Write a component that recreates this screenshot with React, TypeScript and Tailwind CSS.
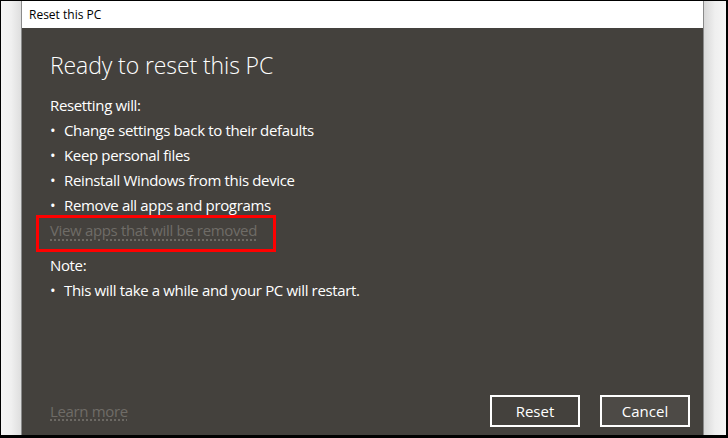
import React from "react";

const font = { fontFamily: '"Open Sans", "Noto Sans", "Liberation Sans", sans-serif' };

function Bullet({ children }: { children: React.ReactNode }) {
  return (
    <div className="flex h-[25px] items-center">
      <span className="w-[14px] text-[15px]">•</span>
      <span>{children}</span>
    </div>
  );
}

export default function App() {
  return (
    <div
      className="flex h-[438px] w-[728px] bg-black pt-px pl-px pr-[2px] pb-[3px] overflow-hidden"
      style={font}
    >
      <div className="w-[20px] shrink-0 bg-gradient-to-r from-[#f4f4f4] via-[#f0f0f0] to-[#dedede]" />
      <div className="flex w-[683px] shrink-0 flex-col border-x border-[#8a8a8a]">
        <div className="flex h-[27px] shrink-0 items-center bg-white pl-[7px] text-[12px] text-black">
          Reset this PC
        </div>
        <div className="relative flex flex-1 flex-col bg-[#44413d] pl-[28px] pr-[13px] pb-[8px] text-white">
          <div className="pt-[21px] text-[23px] font-light leading-[32px] tracking-[-0.1px]">
            Ready to reset this PC
          </div>
          <div className="mt-[12px] flex flex-col text-[15px] tracking-[-0.35px]">
            <div className="flex h-[25px] items-center">Resetting will:</div>
            <Bullet>Change settings back to their defaults</Bullet>
            <Bullet>Keep personal files</Bullet>
            <Bullet>Reinstall Windows from this device</Bullet>
            <Bullet>Remove all apps and programs</Bullet>
            <div className="flex h-[25px] items-center">
              <span className="text-[#6f6c67] underline decoration-dotted decoration-[#7a7772] underline-offset-[3px]">
                View apps that will be removed
              </span>
            </div>
            <div className="mt-[10px] flex h-[25px] items-center">Note:</div>
            <Bullet>This will take a while and your PC will restart.</Bullet>
          </div>
          <div className="flex-1" />
          <div className="flex items-center justify-between">
            <span className="text-[15px] tracking-[-0.35px] text-[#6f6c67] underline decoration-dotted decoration-[#7a7772] underline-offset-[3px]">
              Learn more
            </span>
            <div className="flex gap-[20px]">
              <button className="flex h-[32px] w-[90px] items-center justify-center border-2 border-white bg-[#44413d] text-[15px] text-white">
                Reset
              </button>
              <button className="flex h-[32px] w-[90px] items-center justify-center border-2 border-white bg-[#4d4a46] text-[15px] text-white">
                Cancel
              </button>
            </div>
          </div>
          <div className="absolute left-[14px] top-[187px] h-[37px] w-[240px] border-[3px] border-[#ff0000]" />
        </div>
      </div>
      <div className="w-[22px] shrink-0 bg-gradient-to-r from-[#d8d8d8] via-[#efefef] to-[#f6f6f6]" />
    </div>
  );
}
